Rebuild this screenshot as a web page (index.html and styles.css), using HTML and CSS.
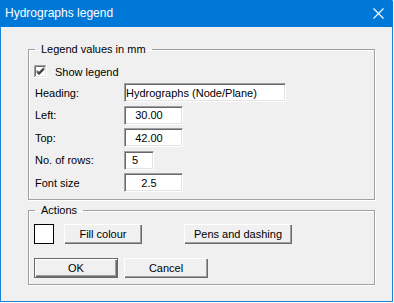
FILE: index.html
```html
<!DOCTYPE html>
<html lang="en">
<head>
    <meta charset="UTF-8">
    <title>Hydrographs legend</title>
    <link rel="stylesheet" href="styles.css">
</head>
<body>
    <div class="window">
        <div class="titlebar">
            <span class="title">Hydrographs legend</span>
            <svg class="close" width="11" height="11" viewBox="0 0 11 11">
                <path d="M0.5 0.5 L10.5 10.5 M10.5 0.5 L0.5 10.5" stroke="#fff" stroke-width="1.1" fill="none"/>
            </svg>
        </div>

        <div class="client">
            <fieldset class="group group-values">
                <legend>Legend values in mm</legend>

                <label class="check-row">
                    <svg class="checkbox" width="13" height="13" viewBox="0 0 13 13">
                        <rect x="0" y="0" width="13" height="13" fill="#fff"/>
                        <path d="M0.5 12 V0.5 H12" stroke="#a0a0a0" fill="none"/>
                        <path d="M1.5 11 V1.5 H11" stroke="#696969" fill="none"/>
                        <path d="M1.5 11.5 H11.5 V1" stroke="#e3e3e3" fill="none"/>
                        <path d="M3 5.5 L5 7.5 L10 2.5 M3 6.5 L5 8.5 L10 3.5 M3 7.5 L5 9.5 L10 4.5" stroke="#000" fill="none"/>
                    </svg>
                    <span>Show legend</span>
                </label>

                <div class="fields">
                    <span class="label">Heading:</span>
                    <input class="field field-wide" type="text" value="Hydrographs (Node/Plane)">

                    <span class="label">Left:</span>
                    <input class="field field-num" type="text" value="   30.00">

                    <span class="label">Top:</span>
                    <input class="field field-num" type="text" value="   42.00">

                    <span class="label">No. of rows:</span>
                    <input class="field field-small" type="text" value="  5">

                    <span class="label">Font size</span>
                    <input class="field field-num" type="text" value="     2.5">
                </div>
            </fieldset>

            <fieldset class="group group-actions">
                <legend>Actions</legend>

                <div class="action-row">
                    <div class="swatch"></div>
                    <button class="btn btn-fill">Fill colour</button>
                    <button class="btn btn-pens">Pens and dashing</button>
                </div>

                <div class="action-row row-ok">
                    <button class="btn btn-default">OK</button>
                    <button class="btn">Cancel</button>
                </div>
            </fieldset>
        </div>
    </div>
</body>
</html>
```

FILE: styles.css
```css
body {
    margin: 0;
    background: #fff;
    font-family: "Liberation Sans", Arial, sans-serif;
    font-size: 11px;
    color: #000;
}

.window {
    width: 393px;
    height: 302px;
    box-sizing: border-box;
    border: 1px solid #1883d7;
    border-top: none;
    border-top-right-radius: 2px;
    background: #f0f0f0;
    display: flex;
    flex-direction: column;
}

.titlebar {
    height: 26px;
    margin: 0 -1px;
    background: #0078d7;
    border-top-right-radius: 2px;
    display: flex;
    align-items: center;
    justify-content: space-between;
    padding: 0 9px 1px 5px;
    color: #fff;
}

.title {
    font-size: 12px;
}

.close {
    display: block;
    margin-top: 1px;
}

.client {
    padding: 16px 0 0 27px;
}

/* group boxes */
.group {
    width: 347px;
    box-sizing: border-box;
    margin: 0;
    border: 1px solid #a0a0a0;
    box-shadow: 1px 1px 0 #fff, inset 1px 1px 0 #fff;
    padding: 0 6px 7px 5px;
}

.group legend {
    padding: 0 6px;
    margin-left: 1px;
    line-height: 13px;
}

.group-values {
    padding-top: 9px;
}

.group-actions {
    margin-top: 4px;
    padding-top: 7px;
    padding-bottom: 6px;
}

/* checkbox row */
.check-row {
    display: flex;
    align-items: center;
    gap: 8px;
    height: 13px;
}

.checkbox {
    display: block;
}

/* label / field grid */
.fields {
    display: grid;
    grid-template-columns: 90px auto;
    grid-auto-rows: 19px;
    row-gap: 3.5px;
    margin-top: 5px;
    align-items: center;
    justify-items: start;
}

.label {
    padding-left: 1px;
}

.field {
    box-sizing: border-box;
    height: 19px;
    margin: 0;
    padding: 0 1px;
    font-family: inherit;
    font-size: 11px;
    color: #000;
    background: #fff;
    border-style: solid;
    border-width: 1px;
    border-color: #a0a0a0 #fff #fff #a0a0a0;
    box-shadow: inset 1px 1px 0 #696969, inset -1px -1px 0 #e3e3e3;
    outline: none;
    white-space: pre;
}

.field-wide {
    width: 162px;
}

.field-num {
    width: 59px;
}

.field-small {
    width: 30px;
}

/* actions */
.action-row {
    display: flex;
    align-items: center;
    height: 20px;
}

.row-ok {
    margin-top: 14px;
    gap: 6px;
}

.swatch {
    width: 20px;
    height: 20px;
    box-sizing: border-box;
    border: 1px solid #000;
    background: #fff;
    margin-right: 10px;
}

.btn {
    box-sizing: border-box;
    height: 20px;
    width: 84px;
    margin: 0;
    padding: 0;
    font-family: inherit;
    font-size: 11px;
    color: #000;
    background: #f0f0f0;
    border: none;
    border-radius: 0;
    box-shadow: inset 1px 1px 0 #fff, inset -1px -1px 0 #696969, inset -2px -2px 0 #a0a0a0;
}

.btn-fill {
    width: 78px;
}

.btn-pens {
    width: 108px;
    margin-left: 42px;
}

.btn-default {
    border: 1px solid #696969;
    box-shadow: inset 1px 1px 0 #fff, inset -1px -1px 0 #696969, inset -2px -2px 0 #a0a0a0;
}
```
